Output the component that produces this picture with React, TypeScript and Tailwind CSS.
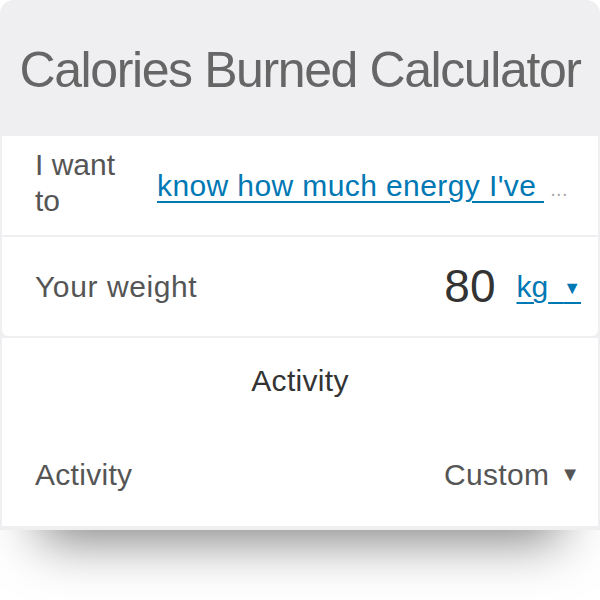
export default function App() {
  return (
    <div className="w-[600px] h-[600px] bg-white overflow-hidden font-['Liberation_Sans',Arial,sans-serif]">
      <div className="rounded-t-[14px] bg-[#efeef1] px-[2px] pb-[2px] shadow-[0_50px_50px_-40px_rgba(0,0,0,0.5)]">
        <div className="h-[136px] flex items-center justify-center pt-[4px]">
          <h1 className="text-[50px] text-[#666666] tracking-[-1.4px]">Calories Burned Calculator</h1>
        </div>

        <div className="bg-white rounded-b-[6px]">
          <div className="h-[101px] flex items-center pl-[33px] pr-[30px] border-b-2 border-[#efeef1]">
            <div className="w-[122px] text-[30px] leading-[36px] text-[#555555] pr-[20px] -mt-[6px]">I want to</div>
            <div className="flex-1 min-w-0 flex items-baseline text-[30px] tracking-[0.4px]">
              <span className="text-[#0078b4] underline underline-offset-[5px] decoration-[2px] whitespace-nowrap overflow-hidden">
                know how much energy I've&nbsp;
              </span>
              <span className="text-[#aaaaaa] text-[20px] ml-[6px]">...</span>
            </div>
          </div>
          <div className="h-[99px] flex items-center pl-[33px] pr-[17px]">
            <div className="flex-1 text-[30px] tracking-[0.6px] text-[#555555]">Your weight</div>
            <div className="text-[46px] text-[#333333] mr-[21px]">80</div>
            <div className="text-[30px] text-[#0078b4] underline underline-offset-[5px] decoration-[2px] whitespace-nowrap">
              kg{"\u2002"}<span className="text-[18px] align-[3px]">▼</span>
            </div>
          </div>
        </div>

        <div className="bg-white mt-[2px] border-b-2 border-[#efeef1]">
          <div className="h-[82px] flex items-center justify-center pt-[2px] text-[30px] tracking-[0.3px] text-[#333333]">Activity</div>
          <div className="h-[106px] flex items-center pl-[33px] pr-[18px] pt-[2px]">
            <div className="flex-1 text-[30px] tracking-[0.3px] text-[#555555]">Activity</div>
            <div className="text-[30px] tracking-[0.3px] text-[#555555]">Custom</div>
            <div className="ml-[11px] text-[20px] text-[#555555]">▼</div>
          </div>
        </div>
      </div>
    </div>
  );
}
